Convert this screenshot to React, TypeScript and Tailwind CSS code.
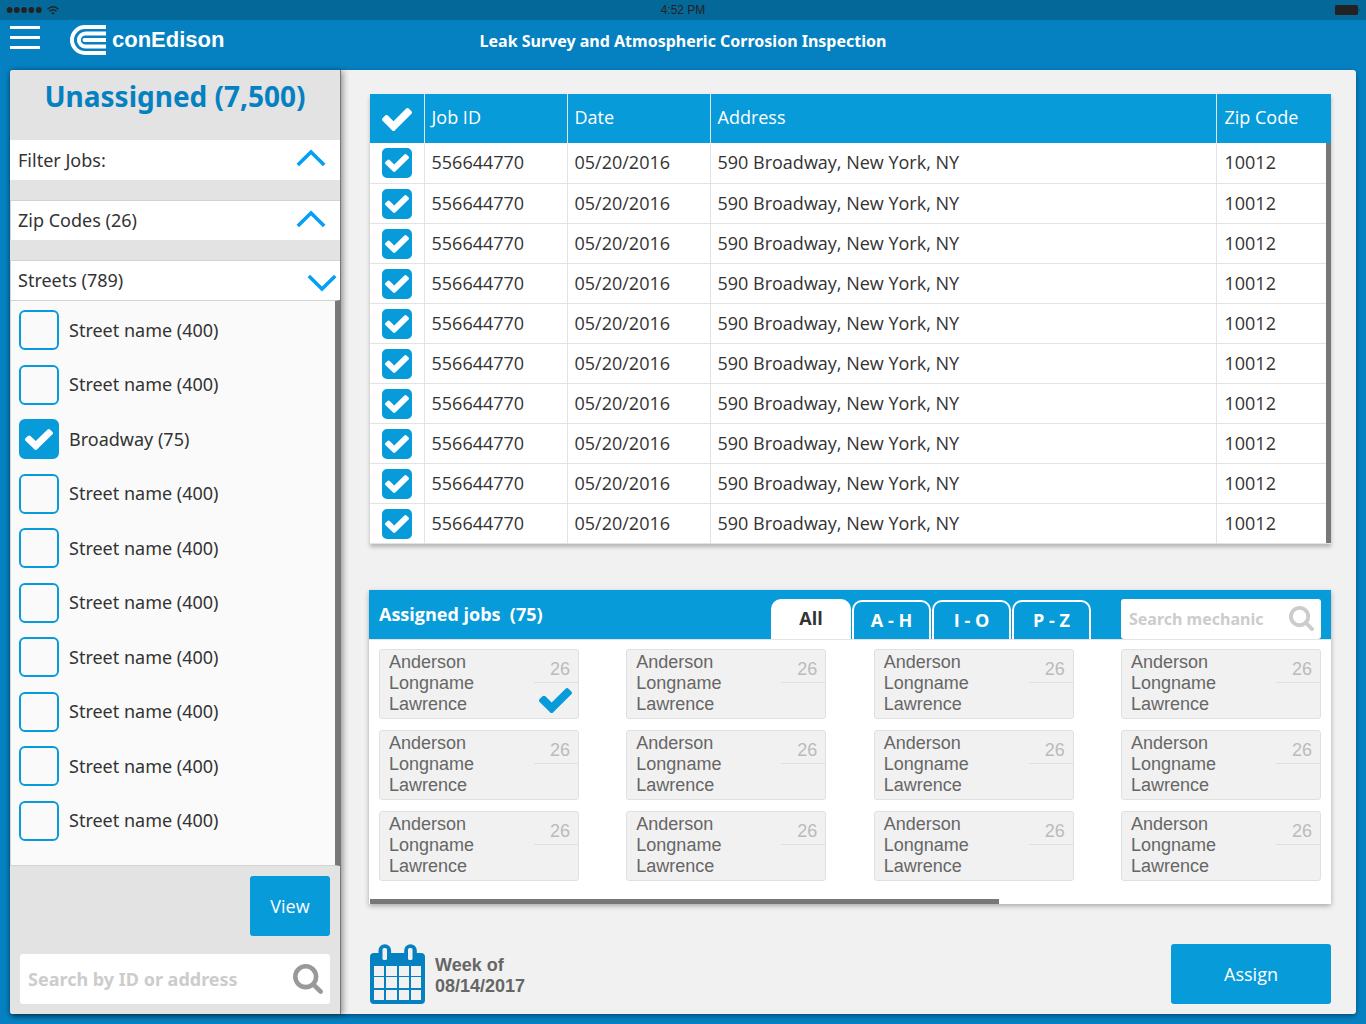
import React, { useState } from 'react';

const streets = [
  'Street name (400)',
  'Street name (400)',
  'Broadway (75)',
  'Street name (400)',
  'Street name (400)',
  'Street name (400)',
  'Street name (400)',
  'Street name (400)',
  'Street name (400)',
  'Street name (400)',
];

const jobs = Array.from({ length: 10 }, () => ({
  id: '556644770',
  date: '05/20/2016',
  address: '590 Broadway, New York, NY',
  zip: '10012',
}));

const mechanics = Array.from({ length: 12 }, () => ({
  names: ['Anderson', 'Longname', 'Lawrence'],
  count: 26,
}));

const tabs = ['All', 'A - H', 'I - O', 'P - Z'];

function CheckIcon({ className }: { className: string }) {
  return (
    <svg viewBox="121 332 1550 1190" preserveAspectRatio="none" fill="currentColor" aria-hidden="true" className={className}>
      <path d="M1671 566q0 40-28 68l-724 724-136 136q-28 28-68 28t-68-28l-136-136-362-362q-28-28-28-68t28-68l136-136q28-28 68-28t68 28l294 295 656-657q28-28 68-28t68 28l136 136q28 28 28 68z" />
    </svg>
  );
}

function SearchIcon({ className }: { className: string }) {
  return (
    <svg viewBox="64 128 1664 1664" fill="currentColor" aria-hidden="true" className={className}>
      <path d="M1216 832q0-185-131.5-316.5t-316.5-131.5-316.5 131.5-131.5 316.5 131.5 316.5 316.5 131.5 316.5-131.5 131.5-316.5zm512 832q0 52-38 90t-90 38q-54 0-90-38l-343-342q-179 124-399 124-143 0-273.5-55.5t-225-150-150-225-55.5-273.5 55.5-273.5 150-225 225-150 273.5-55.5 273.5 55.5 225 150 150 225 55.5 273.5q0 220-124 399l343 343q37 37 37 90z" />
    </svg>
  );
}

function Chevron({ down = false }: { down?: boolean }) {
  return (
    <svg viewBox="0 0 30 18" fill="none" stroke="#03a0f5" strokeWidth="3.6" aria-hidden="true" className="h-[18px] w-[30px]">
      <path d={down ? 'M1.8 2 L15 15 L28.2 2' : 'M1.8 16 L15 3 L28.2 16'} />
    </svg>
  );
}

function StatusBar() {
  return (
    <div className="grid h-5 grid-cols-3 items-center bg-[#046899] px-[6px] text-[#222]">
      <div className="flex items-center gap-[5px]">
        <svg viewBox="0 0 36 6" fill="currentColor" aria-hidden="true" className="h-[6px] w-[36px]">
          <circle cx="3.6" cy="3" r="2.9" />
          <circle cx="10.8" cy="3" r="2.9" />
          <circle cx="18" cy="3" r="2.9" />
          <circle cx="25.3" cy="3" r="2.9" />
          <circle cx="32.8" cy="3" r="2.9" />
        </svg>
        <svg viewBox="0 0 12 9" fill="none" stroke="currentColor" strokeWidth="1.4" aria-hidden="true" className="h-[9px] w-[12px]">
          <path d="M0.5 3.2 Q6 -1.6 11.5 3.2" />
          <path d="M2.5 5.3 Q6 2.2 9.5 5.3" />
          <path d="M6 8.8 L4.2 7 Q6 5.6 7.8 7 Z" fill="currentColor" stroke="none" />
        </svg>
      </div>
      <div className="text-center font-['Liberation_Sans',sans-serif] text-[12px] leading-5">4:52 PM</div>
      <svg viewBox="0 0 26 10" fill="currentColor" aria-hidden="true" className="h-[10px] w-[26px] justify-self-end">
        <rect x="1" y="0" width="23" height="10" rx="1.5" />
        <path d="M24.8 3.2 Q26.2 5 24.8 6.8 Z" />
      </svg>
    </div>
  );
}

function Header() {
  return (
    <header className="grid h-[50px] grid-cols-[1fr_auto_1fr] items-start px-[10px] text-white">
      <div className="flex items-start gap-[30px] pt-[5px]">
        <button type="button" aria-label="Menu" className="flex w-[30px] flex-col gap-[7px] pt-px">
          <span className="h-[3px] w-full bg-white" />
          <span className="h-[3px] w-full bg-white" />
          <span className="h-[3px] w-full bg-white" />
        </button>
        <a href="#" className="flex items-center gap-[6px]">
          <svg viewBox="0 0 36 30" fill="none" stroke="currentColor" strokeWidth="4" aria-hidden="true" className="h-[30px] w-9">
            <path d="M36 2 H15 A13 13 0 0 0 15 28 H36" />
            <path d="M36 8.4 H15.5 A6.6 6.6 0 0 0 15.5 21.6 H36" />
            <path d="M36 15 H14.5" />
            <circle cx="14.5" cy="15" r="2" fill="currentColor" stroke="none" />
          </svg>
          <span className="font-['Liberation_Sans',sans-serif] text-[22px] leading-[30px] font-bold">conEdison</span>
        </a>
      </div>
      <h1 className="font-['Noto_Sans',sans-serif] text-[16px] leading-[42px] font-bold">
        Leak Survey and Atmospheric Corrosion Inspection
      </h1>
    </header>
  );
}

function Sidebar() {
  const [checked, setChecked] = useState(streets.map((s) => s.startsWith('Broadway')));
  return (
    <aside className="z-10 flex w-[331px] shrink-0 flex-col rounded-l-[3px] border-r border-[#777] bg-[#e3e3e3] font-['Noto_Sans',sans-serif] text-[18px] text-[#333] shadow-[2px_1px_6px_rgba(0,0,0,0.4)]">
      <h2 className="h-[70px] text-center text-[28px] leading-[52px] font-bold text-[#0581c2]">Unassigned (7,500)</h2>
      <div className="flex flex-col gap-5">
        <button type="button" className="flex h-10 items-center justify-between bg-white pr-[14px] pl-2">
          Filter Jobs:
          <span className="pb-1">
            <Chevron />
          </span>
        </button>
        <button type="button" className="flex h-10 items-center justify-between border-t border-l border-[#d2d2d2] bg-white pr-[14px] pl-[7px]">
          Zip Codes (26)
          <span className="pb-1">
            <Chevron />
          </span>
        </button>
        <button type="button" className="flex h-10 items-center justify-between border-t border-l border-[#d2d2d2] bg-white pr-[3px] pl-[7px]">
          Streets (789)
          <span className="pt-1">
            <Chevron down />
          </span>
        </button>
      </div>
      <div className="flex flex-1 flex-col justify-between border-y border-r-[5px] border-l border-y-[#d2d2d2] border-r-[#777] border-l-[#d2d2d2] bg-[#fafafa] pt-[9px] pb-6 pl-2">
        {streets.map((name, i) => (
          <label key={i} className="flex items-center gap-[10px]">
            <span className="grid size-10 place-items-center">
              <input
                type="checkbox"
                checked={checked[i]}
                onChange={() => setChecked(checked.map((c, n) => (n === i ? !c : c)))}
                className="peer size-10 appearance-none rounded-[6px] border-2 border-[#089bd9] [grid-area:1/1] checked:bg-[#089bd9]"
              />
              <CheckIcon className="pointer-events-none hidden h-[21px] w-7 text-white [grid-area:1/1] peer-checked:block" />
            </span>
            {name}
          </label>
        ))}
      </div>
      <div className="flex flex-col items-end gap-[18px] p-[10px]">
        <button type="button" className="h-[60px] w-20 rounded-[3px] bg-[#089bd9] font-['Open_Sans',sans-serif] text-white">
          View
        </button>
        <div className="flex h-[50px] w-full items-center rounded-[3px] bg-white pr-[7px] pl-2">
          <input
            type="search"
            aria-label="Search by ID or address"
            placeholder="Search by ID or address"
            className="min-w-0 flex-1 font-bold outline-none placeholder:text-[#ccc]"
          />
          <SearchIcon className="size-[30px] text-[#999]" />
        </div>
      </div>
    </aside>
  );
}

function JobsTable() {
  const [selected, setSelected] = useState(jobs.map(() => true));
  return (
    <div className="shadow-[0_3px_4px_rgba(0,0,0,0.25)]">
      <table className="w-full table-fixed border-collapse bg-white text-left text-[18px] text-[#333]">
        <colgroup>
          <col className="w-[54px]" />
          <col className="w-[143px]" />
          <col className="w-[143px]" />
          <col />
          <col className="w-[109px]" />
          <col className="w-[5px]" />
        </colgroup>
        <thead className="bg-[#089bd9] text-white">
          <tr className="h-[49px]">
            <th className="border-r border-[#e3e3e3] p-0">
              <button type="button" aria-label="Select all" onClick={() => setSelected(jobs.map(() => true))} className="flex w-full justify-center pt-[2px]">
                <CheckIcon className="h-[23px] w-[30px]" />
              </button>
            </th>
            <th className="border-r border-[#e3e3e3] px-[7px] pt-0 pb-[2px] font-normal">Job ID</th>
            <th className="border-r border-[#e3e3e3] px-[7px] pt-0 pb-[2px] font-normal">Date</th>
            <th className="border-r border-[#e3e3e3] px-[7px] pt-0 pb-[2px] font-normal">Address</th>
            <th colSpan={2} className="px-[7px] pt-0 pb-[2px] font-normal">Zip Code</th>
          </tr>
        </thead>
        <tbody>
          {jobs.map((job, i) => (
            <tr key={i} className="h-10 border-b border-[#e3e3e3]">
              <td className="border-r border-[#e3e3e3] p-0">
                <label className="grid place-items-center pt-px">
                  <input
                    type="checkbox"
                    aria-label={'Select job ' + job.id}
                    checked={selected[i]}
                    onChange={() => setSelected(selected.map((s, n) => (n === i ? !s : s)))}
                    className="peer size-[30px] appearance-none rounded-[5px] border-2 border-[#089bd9] [grid-area:1/1] checked:bg-[#089bd9]"
                  />
                  <CheckIcon className="pointer-events-none hidden h-[18px] w-6 text-white [grid-area:1/1] peer-checked:block" />
                </label>
              </td>
              <td className="border-r border-[#e3e3e3] px-[7px] py-0">{job.id}</td>
              <td className="border-r border-[#e3e3e3] px-[7px] py-0">{job.date}</td>
              <td className="border-r border-[#e3e3e3] px-[7px] py-0">{job.address}</td>
              <td className="px-[7px] py-0">{job.zip}</td>
              {i === 0 && <td rowSpan={jobs.length} className="bg-[#777] p-0" />}
            </tr>
          ))}
        </tbody>
      </table>
    </div>
  );
}

function AssignedJobs() {
  const [tab, setTab] = useState('All');
  const [chosen, setChosen] = useState(0);
  return (
    <section className="bg-white shadow-[0_2px_5px_rgba(0,0,0,0.3)]">
      <div className="flex h-[49px] items-end bg-[#089bd9] px-[10px] text-white">
        <h2 className="flex-1 self-center text-[18px] font-bold whitespace-pre">Assigned jobs  (75)</h2>
        <div role="tablist" className="flex items-end gap-px text-[18px] font-bold">
          {tabs.map((t) => (
            <button
              key={t}
              type="button"
              role="tab"
              aria-selected={tab === t}
              onClick={() => setTab(t)}
              className={
                tab === t
                  ? 'h-10 w-20 rounded-t-[10px] bg-white text-[#333]'
                  : 'h-[39px] w-[79px] rounded-t-[10px] border-x-2 border-t-2 border-white'
              }
            >
              {t}
            </button>
          ))}
        </div>
        <div className="ml-[30px] flex h-10 w-[200px] items-center rounded-[3px] bg-white pr-[7px] pl-2">
          <input
            type="search"
            aria-label="Search mechanic"
            placeholder="Search mechanic"
            className="min-w-0 flex-1 font-['Noto_Sans',sans-serif] text-[16px] font-bold text-[#333] outline-none placeholder:text-[#ccc]"
          />
          <SearchIcon className="size-[25px] text-[#ccc]" />
        </div>
      </div>
      <div className="grid grid-cols-[repeat(4,200px)] justify-between gap-y-[11px] border-t border-[#e3e3e3] px-[10px] pt-[9px] pb-[18px] font-['Liberation_Sans',sans-serif] text-[18px]">
        {mechanics.map((m, i) => (
          <button
            key={i}
            type="button"
            aria-pressed={chosen === i}
            onClick={() => setChosen(i)}
            className="flex h-[70px] items-start justify-between rounded-[3px] border border-[#e0e0e0] bg-[#f1f1f1] pl-[9px] text-left leading-[21px] text-[#666]"
          >
            <span className="pt-[2px]">
              {m.names.map((n) => (
                <span key={n} className="block">{n}</span>
              ))}
            </span>
            <span className="flex w-11 flex-col items-end">
              <span className="w-full border-b border-[#e0e0e0] pt-[9px] pr-2 pb-[2px] text-right text-[#bbb]">{m.count}</span>
              {chosen === i && <CheckIcon className="mt-[5px] mr-[6px] h-[25px] w-[33px] text-[#089bd9]" />}
            </span>
          </button>
        ))}
      </div>
      <div className="h-[5px] bg-white pl-px">
        <div className="h-full w-[65.5%] bg-[#777]" />
      </div>
    </section>
  );
}

function CalendarIcon() {
  return (
    <svg viewBox="0 0 55 60" aria-hidden="true" className="h-[60px] w-[55px]">
      <path d="M8.5 9 V6.5 A6.3 6.3 0 0 1 21.1 6.5 V9 H34.2 V6.5 A6.3 6.3 0 0 1 46.8 6.5 V9 H51 Q55 9 55 13 V56 Q55 60 51 60 H4 Q0 60 0 56 V13 Q0 9 4 9 Z" fill="#0581c2" />
      <g fill="#f1f1f1">
        <rect x="12.5" y="4" width="4.5" height="12" rx="1.5" />
        <rect x="38" y="4" width="4.5" height="12" rx="1.5" />
        {[22, 33, 46].map((y) => (
          <React.Fragment key={y}>
            <rect x="4" y={y} width="10" height={y === 33 ? 11 : 10} />
            <rect x="16" y={y} width="11" height={y === 33 ? 11 : 10} />
            <rect x="29" y={y} width="10" height={y === 33 ? 11 : 10} />
            <rect x="41" y={y} width="10" height={y === 33 ? 11 : 10} />
          </React.Fragment>
        ))}
      </g>
    </svg>
  );
}

export default function App() {
  return (
    <div className="flex min-h-screen flex-col bg-[#0581c2] font-['Open_Sans',sans-serif]">
      <StatusBar />
      <Header />
      <div className="mx-[10px] mb-[10px] flex flex-1 rounded-[3px] bg-[#f1f1f1] shadow-[0_2px_5px_rgba(0,0,0,0.4)]">
        <Sidebar />
        <main className="flex min-w-0 flex-1 flex-col pt-6 pr-[25px] pb-[10px] pl-[29px]">
          <JobsTable />
          <div className="mt-[46px] -ml-px">
            <AssignedJobs />
          </div>
          <div className="mt-auto flex items-center justify-between">
            <button type="button" className="flex items-center gap-[10px] text-left font-['Liberation_Sans',sans-serif] text-[18px] leading-[21px] font-bold text-[#666]">
              <CalendarIcon />
              <span className="pt-1">
                Week of
                <br />
                08/14/2017
              </span>
            </button>
            <button type="button" className="h-[60px] w-40 rounded-[3px] bg-[#089bd9] text-[18px] text-white">
              Assign
            </button>
          </div>
        </main>
      </div>
    </div>
  );
}
